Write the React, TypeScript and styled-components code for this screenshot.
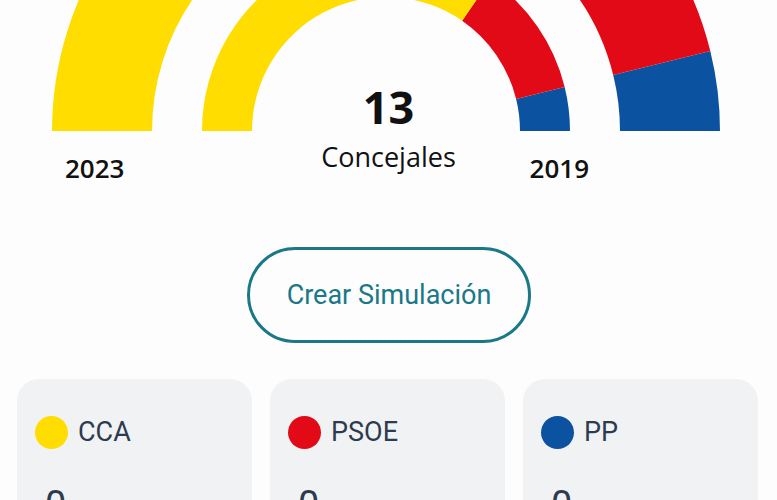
import React from "react";
import styled, { createGlobalStyle } from "styled-components";

const colors = {
  CCA: "#FFDD00",
  PSOE: "#E20A17",
  PP: "#0B53A0",
  TEAL: "#1A7888",
  SLATE: "#2D3B4F",
  CARD: "#F1F2F4",
  PAGE: "#FDFDFD",
};

const GlobalStyle = createGlobalStyle`
  html, body {
    margin: 0;
    padding: 0;
    background: ${colors.PAGE};
    overflow: hidden;
  }
  body {
    font-family: "Open Sans", "Liberation Sans", sans-serif;
  }
`;

const Page = styled.div`
  width: 777px;
  height: 500px;
  overflow: hidden;
  display: flex;
  flex-direction: column;
  align-items: stretch;
`;

const Stage = styled.section`
  display: grid;
  grid-template-columns: 1fr auto 1fr;
  grid-template-rows: 131px auto;
`;

const ChartSvg = styled.svg`
  grid-column: 1 / -1;
  grid-row: 1;
  display: block;
`;

const Center = styled.div`
  grid-column: 2;
  grid-row: 1 / 3;
  margin-top: 76px;
  display: flex;
  flex-direction: column;
  align-items: center;
  gap: 1px;
  color: #111;
`;

const Total = styled.span`
  font-size: 45px;
  font-weight: 700;
  line-height: normal;
`;

const Caption = styled.span`
  font-size: 27px;
  font-weight: 400;
  line-height: normal;
`;

const Year = styled.span<{ $side: "left" | "right" }>`
  grid-row: 2;
  grid-column: ${(p) => (p.$side === "left" ? 1 : 3)};
  justify-self: ${(p) => (p.$side === "left" ? "start" : "end")};
  margin: 19px ${(p) => (p.$side === "left" ? "0 0 65px" : "188px 0 0")};
  font-size: 26px;
  font-weight: 600;
  line-height: normal;
  color: #111;
`;

const ButtonRow = styled.div`
  display: flex;
  justify-content: center;
  margin-top: 61px;
  padding-left: 1px;
`;

const SimButton = styled.button`
  width: 284px;
  height: 96px;
  border: 3px solid ${colors.TEAL};
  border-radius: 48px;
  background: transparent;
  color: ${colors.TEAL};
  font-family: Roboto, "Liberation Sans", sans-serif;
  font-size: 27px;
  font-weight: 400;
  cursor: pointer;
`;

const Cards = styled.div`
  display: grid;
  grid-template-columns: repeat(3, 235px);
  gap: 18px;
  padding: 0 19px 0 17px;
  margin-top: 36px;
`;

const Card = styled.div`
  background: ${colors.CARD};
  border-radius: 22px;
  padding: 37px 18px 0;
  height: 200px;
  font-family: Roboto, "Liberation Sans", sans-serif;
  color: ${colors.SLATE};
`;

const PartyRow = styled.div`
  display: flex;
  align-items: center;
  gap: 10px;
`;

const Dot = styled.span<{ $color: string }>`
  width: 33px;
  height: 33px;
  border-radius: 50%;
  background: ${(p) => p.$color};
  flex: none;
`;

const PartyName = styled.span`
  font-size: 27px;
  line-height: 1;
`;

const Seats = styled.div`
  margin: 34px 0 0 10px;
  font-size: 38px;
  line-height: normal;
`;

type Segment = { party: keyof typeof colors; seats: number };

const CX = 386;
const CY = 131;
const TOTAL = 13;

const outer: Segment[] = [
  { party: "PP", seats: 1 },
  { party: "PSOE", seats: 2 },
  { party: "CCA", seats: 10 },
];

const inner: Segment[] = [
  { party: "PP", seats: 1 },
  { party: "PSOE", seats: 3 },
  { party: "CCA", seats: 9 },
];

function point(r: number, deg: number) {
  const a = (deg * Math.PI) / 180;
  return `${CX + r * Math.cos(a)} ${CY - r * Math.sin(a)}`;
}

function arc(rIn: number, rOut: number, a1: number, a2: number) {
  return [
    `M ${point(rOut, a1)}`,
    `A ${rOut} ${rOut} 0 0 0 ${point(rOut, a2)}`,
    `L ${point(rIn, a2)}`,
    `A ${rIn} ${rIn} 0 0 1 ${point(rIn, a1)}`,
    "Z",
  ].join(" ");
}

function Ring({ data, rIn, rOut }: { data: Segment[]; rIn: number; rOut: number }) {
  let start = 0;
  return (
    <>
      {data.map((s) => {
        const end = start + (s.seats / TOTAL) * 180;
        const d = arc(rIn, rOut, start, end);
        start = end;
        return <path key={s.party} d={d} fill={colors[s.party]} />;
      })}
    </>
  );
}

const parties: { name: string; color: string; seats: number }[] = [
  { name: "CCA", color: colors.CCA, seats: 0 },
  { name: "PSOE", color: colors.PSOE, seats: 0 },
  { name: "PP", color: colors.PP, seats: 0 },
];

export default function App() {
  return (
    <>
      <GlobalStyle />
      <Page>
        <Stage>
          <ChartSvg width={777} height={131} viewBox="0 0 777 131">
            <Ring data={outer} rIn={234} rOut={334} />
            <Ring data={inner} rIn={134} rOut={184} />
          </ChartSvg>
          <Center>
            <Total>13</Total>
            <Caption>Concejales</Caption>
          </Center>
          <Year $side="left">2023</Year>
          <Year $side="right">2019</Year>
        </Stage>
        <ButtonRow>
          <SimButton>Crear Simulación</SimButton>
        </ButtonRow>
        <Cards>
          {parties.map((p) => (
            <Card key={p.name}>
              <PartyRow>
                <Dot $color={p.color} />
                <PartyName>{p.name}</PartyName>
              </PartyRow>
              <Seats>{p.seats}</Seats>
            </Card>
          ))}
        </Cards>
      </Page>
    </>
  );
}
